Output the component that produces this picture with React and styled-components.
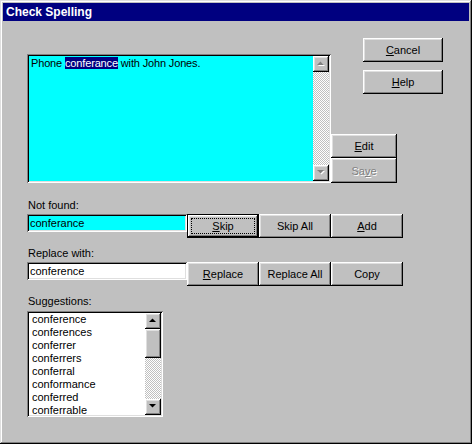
import React from 'react';
import styled, { createGlobalStyle, css } from 'styled-components';

const Global = createGlobalStyle`
  html, body { margin: 0; padding: 0; background: #c0c0c0; }
  body {
    font-family: "Liberation Sans", Arial, sans-serif;
    font-size: 11px;
    color: #000;
    -webkit-font-smoothing: none;
  }
`;

const raised = css`
  box-shadow: inset -1px -1px #000, inset 1px 1px #fff, inset -2px -2px #808080, inset 2px 2px #dfdfdf;
`;

const sunken = css`
  box-shadow: inset 1px 1px #808080, inset -1px -1px #fff, inset 2px 2px #000, inset -2px -2px #dfdfdf;
`;

const Window = styled.div`
  width: 472px;
  height: 444px;
  box-sizing: border-box;
  background: #c0c0c0;
  padding: 3px;
  box-shadow: inset -1px -1px #000, inset 1px 1px #dfdfdf, inset -2px -2px #808080, inset 2px 2px #fff;
  display: flex;
  flex-direction: column;
`;

const TitleBar = styled.div`
  height: 18px;
  background: #000080;
  color: #fff;
  font-weight: bold;
  font-size: 12px;
  display: flex;
  align-items: center;
  padding-left: 3px;
`;

const Content = styled.div`
  padding: 17px 0 0 24px;
  display: flex;
  flex-direction: column;
`;

const TopRow = styled.div`
  display: flex;
  align-items: flex-end;
`;

const Sunken = styled.div`
  ${sunken};
  box-sizing: border-box;
  width: ${p => p.$w}px;
  height: ${p => p.$h}px;
  margin-top: ${p => p.$mt || 0}px;
  padding: 2px;
  display: flex;
`;

const EditorText = styled.div`
  flex: 1;
  background: #00ffff;
  padding: 1px 2px;
  line-height: 13px;
  white-space: nowrap;
  overflow: hidden;
  letter-spacing: -0.15px;
`;

const Selected = styled.span`
  background: #000080;
  color: #fff;
`;

const ScrollBar = styled.div`
  width: 16px;
  display: flex;
  flex-direction: column;
`;

const Track = styled.div`
  flex: 1;
  background: repeating-conic-gradient(#c0c0c0 0% 25%, #fff 0% 50%) 0 0 / 2px 2px;
`;

const ArrowBox = styled.div`
  ${raised};
  width: 16px;
  height: 16px;
  background: #c0c0c0;
  display: flex;
  align-items: center;
  justify-content: center;
`;

const Thumb = styled.div`
  ${raised};
  width: 16px;
  height: ${p => p.$h}px;
  background: #c0c0c0;
`;

const Arrow = ({ dir, disabled }) => {
  const pts = dir === 'up' ? '0,4 7,4 3.5,0.5' : '0,0 7,0 3.5,3.5';
  return (
    <svg width="9" height="6" viewBox="0 0 9 6" style={{ display: 'block' }}>
      {disabled && <polygon points={pts} fill="#fff" transform="translate(1,1)" />}
      <polygon points={pts} fill={disabled ? '#808080' : '#000'} />
    </svg>
  );
};

const Scroll = ({ disabled, thumb }) => (
  <ScrollBar>
    <ArrowBox><Arrow dir="up" disabled={disabled} /></ArrowBox>
    {thumb ? <Thumb $h={thumb} /> : null}
    <Track />
    <ArrowBox><Arrow dir="down" disabled={disabled} /></ArrowBox>
  </ScrollBar>
);

const RightColumn = styled.div`
  display: flex;
  flex-direction: column;
  align-items: flex-start;
`;

const Btn = styled.button`
  position: relative;
  ${raised};
  box-sizing: border-box;
  width: ${p => p.$w}px;
  height: ${p => p.$h || 24}px;
  margin: ${p => p.$m || '0'};
  padding: 0;
  border: none;
  background: #c0c0c0;
  font-family: "Liberation Sans", Arial, sans-serif;
  font-size: 11px;
  color: ${p => (p.$disabled ? '#808080' : '#000')};
  text-shadow: ${p => (p.$disabled ? '1px 1px #fff' : 'none')};
  display: flex;
  align-items: center;
  justify-content: center;
  flex-shrink: 0;
  u { text-decoration-thickness: 1px; text-underline-offset: 1px; }
  ${p => p.$default && css`
    box-shadow: inset 0 0 0 1px #000, inset -2px -2px #000, inset 2px 2px #fff, inset -3px -3px #808080, inset 3px 3px #dfdfdf;
    &::after {
      content: '';
      position: absolute;
      inset: 4px;
      border: 1px dotted #000;
    }
  `}
`;

const Label = styled.div`
  line-height: 14px;
  margin-top: ${p => p.$mt}px;
  margin-left: 1px;
`;

const FieldRow = styled.div`
  display: flex;
  align-items: flex-start;
  margin-top: 2px;
`;

const Field = styled.div`
  ${sunken};
  box-sizing: border-box;
  width: 160px;
  height: 18px;
  padding: 2px 3px;
  line-height: 14px;
  background: ${p => p.$bg};
`;

const ListBody = styled.div`
  flex: 1;
  background: #fff;
  overflow: hidden;
  padding-left: 3px;
`;

const ListItem = styled.div`
  line-height: 13px;
  white-space: nowrap;
`;

const suggestions = [
  'conference', 'conferences', 'conferrer', 'conferrers',
  'conferral', 'conformance', 'conferred', 'conferrable',
];

export default function App() {
  return (
    <>
      <Global />
      <Window>
        <TitleBar>Check Spelling</TitleBar>
        <Content>
          <TopRow>
            <Sunken $w={304} $h={129}>
              <EditorText>
                Phone <Selected>conferance</Selected> with John Jones.
              </EditorText>
              <Scroll disabled />
            </Sunken>
            <RightColumn>
              <Btn $w={80} $m="0 0 0 32px"><span><u>C</u>ancel</span></Btn>
              <Btn $w={80} $m="8px 0 0 32px"><span><u>H</u>elp</span></Btn>
              <Btn $w={66} $m="40px 0 0 0"><span><u>E</u>dit</span></Btn>
              <Btn $w={66} $h={25} $disabled><span>Sa<u>v</u>e</span></Btn>
            </RightColumn>
          </TopRow>

          <Label $mt={15}>Not found:</Label>
          <FieldRow>
            <Field $bg="#00ffff">conferance</Field>
            <Btn $w={72} $default><span><u>S</u>kip</span></Btn>
            <Btn $w={72}>Skip All</Btn>
            <Btn $w={72}><span><u>A</u>dd</span></Btn>
          </FieldRow>

          <Label $mt={8}>Replace with:</Label>
          <FieldRow>
            <Field $bg="#fff">conference</Field>
            <Btn $w={72}><span><u>R</u>eplace</span></Btn>
            <Btn $w={72}>Replace All</Btn>
            <Btn $w={72}>Copy</Btn>
          </FieldRow>

          <Label $mt={8}>Suggestions:</Label>
          <FieldRow>
            <Sunken $w={136} $h={106} $mt={1}>
              <ListBody>
                {suggestions.map(s => <ListItem key={s}>{s}</ListItem>)}
              </ListBody>
              <Scroll thumb={29} />
            </Sunken>
          </FieldRow>
        </Content>
      </Window>
    </>
  );
}
